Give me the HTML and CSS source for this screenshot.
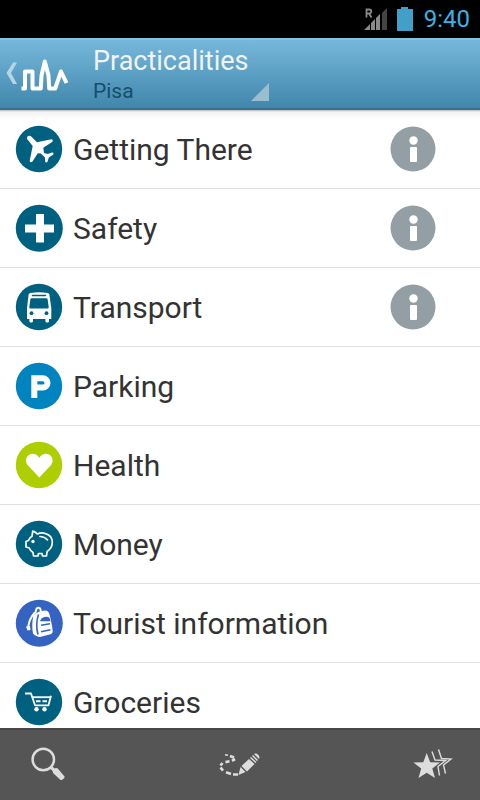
FILE: index.html
```html
<!DOCTYPE html>
<html lang="en">
<head>
<meta charset="utf-8">
<meta name="viewport" content="width=device-width, initial-scale=1">
<title>Practicalities</title>
<link rel="stylesheet" href="styles.css">
</head>
<body>
<div class="status">
  <svg class="signal" width="24" height="24" viewBox="0 0 24 24" aria-hidden="true">
    <path d="M0 23l6-6v6zM7 16l4-4v11H7zM12 11l4-4v16h-4z" fill="#8a8a8a"/>
    <path d="M18 6l5-5v22h-5z" fill="#444"/>
    <path d="M2.500 10.500V2.500h2.800a2 2 0 0 1 0 4H3M5 6.500l2.500 4" fill="none" stroke="#8a8a8a" stroke-width="1.800"/>
  </svg>
  <svg width="16" height="24" viewBox="0 0 16 24" aria-hidden="true"><path d="M0 2h4V0h7v2h5v22H0z" fill="#429fc9"/></svg>
  <span class="clock">9:40</span>
</div>
<header class="bar">
  <button class="home" aria-label="Back">
    <svg width="72" height="40" viewBox="0 0 72 40" aria-hidden="true">
      <path d="M13 8.500h4L11 19l6 11h-4L6.500 19z" fill="#b5d5e5"/>
      <path d="M21.500 34.500h3.500V17.500h7.500v17h8.300l.7-13 3.300-14 3.700 14 .7 13h6L61 17.500l5.500 11.500" fill="none" stroke="#fff" stroke-width="4" stroke-linejoin="round"/>
    </svg>
  </button>
  <button class="spinner">
    <span class="title">Practicalities</span>
    <span class="subtitle">Pisa</span>
    <svg class="corner" width="18" height="18" viewBox="0 0 18 18" aria-hidden="true"><path d="M0 18L18 0v18z" fill="#9bbecf"/></svg>
  </button>
</header>
<main>
<ul class="list">
  <li class="row">
    <a href="#getting-there"><svg class="icon" viewBox="0 0 48 48" aria-hidden="true"><circle cx="24" cy="24" r="23.200" fill="#006080"/><path d="M12.400 11.700c1-1.400 3-1.100 4.300.2l5.300 5.400 14.300-3c1.600 0 2 1.700.8 2.700L28.300 22.800l.7 5.100 3.700 1 4.300-1.300c1.500-.2 2 1.200 1 2.200l-4.200 2.700-1.300 4.300c-.8 1.200-2.200 1-2.300-.5l-.4-4-4-3.800-3-.3-5.300 8.300c-1.200 1.300-3 .7-2.800-1l3-14.500-5-6.200c-.8-.9-1-2-.3-3.100z" fill="#fff"/></svg><span>Getting There</span></a>
    <button class="info" aria-label="About Getting There"><svg viewBox="0 0 46 46" aria-hidden="true"><circle cx="23" cy="23" r="22.500" fill="#939fa5"/><circle cx="23.500" cy="14.500" r="4.200" fill="#fff"/><rect x="20" y="21" width="7" height="15" rx="1" fill="#fff"/></svg></button>
  </li>
  <li class="row">
    <a href="#safety"><svg class="icon" viewBox="0 0 48 48" aria-hidden="true"><circle cx="24.300" cy="24.200" r="23.500" fill="#006080"/><path d="M21 10h8v10.500h10v8H29V38.500h-8V28.500H10v-8h11z" fill="#fff"/></svg><span>Safety</span></a>
    <button class="info" aria-label="About Safety"><svg viewBox="0 0 46 46" aria-hidden="true"><circle cx="23" cy="23" r="22.500" fill="#939fa5"/><circle cx="23.500" cy="14.500" r="4.200" fill="#fff"/><rect x="20" y="21" width="7" height="15" rx="1" fill="#fff"/></svg></button>
  </li>
  <li class="row">
    <a href="#transport"><svg class="icon" viewBox="0 0 48 48" aria-hidden="true"><circle cx="24" cy="24" r="23.200" fill="#006080"/><path d="M13.500 12.200c0-1.300.8-2 2-2.200 6-1 11-1 17 0 1.200.2 2 .9 2 2.200L36.300 25v11H34v2c0 2-3.600 2-3.600 0v-2H18v2c0 2-3.600 2-3.600 0v-2H12V25z" fill="#fff"/><path d="M17.500 12.500h13" stroke="#006080" stroke-width="1.500" stroke-linecap="round"/><path d="M16.500 15.300h15c.6 0 1 .4 1.100 1L33.700 24c0 1-.6 1.600-1.500 1.600H15.800c-.9 0-1.500-.6-1.500-1.600l1.100-7.700c.1-.6.500-1 1.100-1z" fill="#006080"/><circle cx="16.500" cy="30.200" r="1.900" fill="#006080"/><circle cx="31.500" cy="30.200" r="1.900" fill="#006080"/></svg><span>Transport</span></a>
    <button class="info" aria-label="About Transport"><svg viewBox="0 0 46 46" aria-hidden="true"><circle cx="23" cy="23" r="22.500" fill="#939fa5"/><circle cx="23.500" cy="14.500" r="4.200" fill="#fff"/><rect x="20" y="21" width="7" height="15" rx="1" fill="#fff"/></svg></button>
  </li>
  <li class="row">
    <a href="#parking"><svg class="icon" viewBox="0 0 48 48" aria-hidden="true"><circle cx="24" cy="24" r="23.200" fill="#0084c0"/><path d="M19.300 36V16.200h8.500a4.700 4.700 0 0 1 0 9.400h-8.500" fill="none" stroke="#fff" stroke-width="6"/></svg><span>Parking</span></a>
  </li>
  <li class="row">
    <a href="#health"><svg class="icon" viewBox="0 0 48 48" aria-hidden="true"><circle cx="24" cy="24" r="23.200" fill="#aece00"/><path d="M24.300 36.500L13 24.500c-5-6 .2-12.500 5.300-11.800 2.800.2 4.800 1.700 6 4.200 1.200-2.500 3.200-4 6-4.200 5.300-.6 10.200 5.800 5.400 11.800z" fill="#fff"/></svg><span>Health</span></a>
  </li>
  <li class="row">
    <a href="#money"><svg class="icon" viewBox="0 0 48 48" aria-hidden="true"><circle cx="24" cy="24" r="23.200" fill="#006080"/><g fill="none" stroke="#fff" stroke-width="1.700" stroke-linejoin="round" stroke-linecap="round"><path d="M17.800 11c2 .7 3.500 1.800 4.500 3 2-.9 5-1.300 7.500-.7 5 1.200 7.700 5 7.500 9.500-.2 4-2.200 6.800-5.200 8.700L31.500 36h-4l-.5-2.500h-3.500L23 36h-4.500L18 32.500c-2-1.200-3-2.600-3.700-4.500L11 27v-5.500l2.500-1c.6-1.700 1.800-3.200 3.500-4.200z"/><path d="M25 16.500c3 0 5.500 1.200 7.500 3.300"/></g><circle cx="18" cy="21.500" r="1.700" fill="#fff"/></svg><span>Money</span></a>
  </li>
  <li class="row">
    <a href="#tourist-information"><svg class="icon" viewBox="0 0 48 48" aria-hidden="true"><circle cx="24.300" cy="24.200" r="23.500" fill="#3563c1"/><path d="M18.500 16c2.500-2.200 7-4.200 11.500-4.500 2.500 0 3.800 1.500 4.500 4 1.300 5 2.600 10.500 3.200 16.500 0 1.700-.7 2.700-2.200 3.200L25 38c-2.500 0-5.200-1.300-7-3.500-1.300-6-.8-13 .5-18.500z" fill="#fff"/><path d="M20.500 13.500l.8-3.200c.7-2.200 3.900-2 4.200.2l.2 1.500M19.500 14c-3.200 3.500-5.500 8.500-6.200 13.500" fill="none" stroke="#fff" stroke-width="2" stroke-linecap="round"/><path d="M11 27.500l4-.5.500 4-3 .5z" fill="#fff"/><path d="M23.500 15.500c-2 6-2.300 13.500-.5 20" fill="none" stroke="#3563c1" stroke-width="1.600"/><path d="M26 21.500c1-2.800 6-4.300 8-2l.5 2zM26 26.200l9-1.500M26 32.800l9.500-2" fill="#3563c1" stroke="#3563c1" stroke-width="1.400"/></svg><span>Tourist information</span></a>
  </li>
  <li class="row">
    <a href="#groceries"><svg class="icon" viewBox="0 0 48 48" aria-hidden="true"><circle cx="24" cy="24" r="23.200" fill="#006080"/><g fill="none" stroke="#fff" stroke-width="1.800" stroke-linejoin="round"><path d="M10 15.500h6l4 11.800h13.500l2.500-9.600"/><path d="M17.200 19.200h18"/></g><path d="M21 23.300h4.500M27.500 23.300h4.500" stroke="#fff" stroke-width="2"/><circle cx="21.500" cy="31.300" r="2.200" fill="#fff"/><circle cx="29.500" cy="31.300" r="2.200" fill="#fff"/></svg><span>Groceries</span></a>
  </li>
</ul>
</main>
<nav class="tools">
  <button aria-label="Search"><svg width="48" height="48" viewBox="0 0 48 48" aria-hidden="true"><circle cx="19.300" cy="18.500" r="10.700" fill="none" stroke="#ddd" stroke-width="2.500"/><path d="M27 26.500l3 2.500" stroke="#ddd" stroke-width="3"/><path d="M28.500 29.500l3-2.500 2 .3 7 8.200c.5 1.500-2.500 4-4 3.500l-7.500-7z" fill="#ddd"/></svg></button>
  <button aria-label="Plan a route"><svg width="48" height="48" viewBox="0 0 48 48" aria-hidden="true"><path d="M9 13.800l3 .5" stroke="#ddd" stroke-width="1.500"/><path d="M14 15l4 1.600M19 18l-3 1.800M13.500 20.300l-4 .8M6.500 22l-2 2.500M4.500 26.500l2.500 3.200M10 31.300l5 1.700M17 33.500h5" fill="none" stroke="#ddd" stroke-width="2.700"/><path d="M22.500 34l2-8 5 5zM25.500 25L33 18l5.500 5-7.500 7.500zM34 17l1-1 5.500 5-1 1zM36 15l1-1 5 5-1 1zM38 13c2-2 7 2 5 5z" fill="#ddd"/></svg></button>
  <button aria-label="Favourites"><svg width="48" height="48" viewBox="0 0 48 48" aria-hidden="true"><path d="M18.700 12l3.500 9.200 9.800.4-7.700 6 2.700 9.400-8.300-5.300-8.200 5.300 2.700-9.400-7.700-6 9.800-.4z" fill="#ddd"/><path d="M24 10.500l3 8.500 10.500.5-7.500 6 1.500 9M30.500 8.500l3 9 9.500.5-7.500 6 2 8.500" fill="none" stroke="#ddd" stroke-width="1.400"/></svg></button>
</nav>
</body>
</html>
```
FILE: styles.css
```css
* {
  box-sizing: border-box;
}

body {
  margin: 0;
  height: 100vh;
  display: flex;
  flex-direction: column;
  background: #fff;
  color: #333;
  font-family: Roboto, "Noto Sans", sans-serif;
}

button {
  margin: 0;
  padding: 0;
  border: 0;
  background: none;
  color: inherit;
  font: inherit;
  text-align: left;
}

svg {
  display: block;
  flex: none;
}

.status {
  flex: none;
  display: flex;
  justify-content: flex-end;
  align-items: center;
  gap: 9px;
  height: 38px;
  padding: 0 10px 0 0;
  background: #000;
}

.clock {
  margin-left: 2px;
  color: #33b5e5;
  font-size: 24px;
  line-height: 32px;
}

.bar {
  flex: none;
  display: flex;
  align-items: stretch;
  height: 72px;
  border-top: 2px solid #83c4e6;
  border-bottom: 2px solid #35718f;
  background: linear-gradient(#76b8dc, #4087ab);
}

.home {
  display: flex;
  align-items: center;
  width: 84px;
}

.spinner {
  position: relative;
  width: 186px;
  padding: 2px 9px 0;
}

.title,
.subtitle {
  display: block;
}

.title {
  color: #f2f2f2;
  font-size: 27px;
  line-height: 32px;
}

.subtitle {
  color: #174e6e;
  font-size: 21px;
  line-height: 28px;
}

.corner {
  position: absolute;
  right: 1px;
  bottom: 7px;
}

main {
  flex: 1;
  min-height: 0;
  overflow: hidden;
  background: linear-gradient(#bbb, #f2f2f2 2px, #fff 10px);
}

.list {
  margin: 0;
  padding: 0;
  list-style: none;
}

.row {
  display: flex;
  align-items: center;
  height: 79px;
  padding: 0 44px 0 15px;
  border-bottom: 1px solid #e0e0e0;
}

.row a {
  flex: 1;
  display: flex;
  align-items: center;
  gap: 10px;
  color: inherit;
  text-decoration: none;
  font-size: 30px;
  line-height: 40px;
}

.row span {
  padding-top: 2px;
}

.icon {
  width: 48px;
  height: 48px;
}

.info svg {
  width: 46px;
  height: 46px;
}

.tools {
  flex: none;
  display: flex;
  justify-content: space-between;
  align-items: center;
  height: 72px;
  padding: 0 24px;
  border-top: 2px solid #484848;
  background: #555;
}
```
